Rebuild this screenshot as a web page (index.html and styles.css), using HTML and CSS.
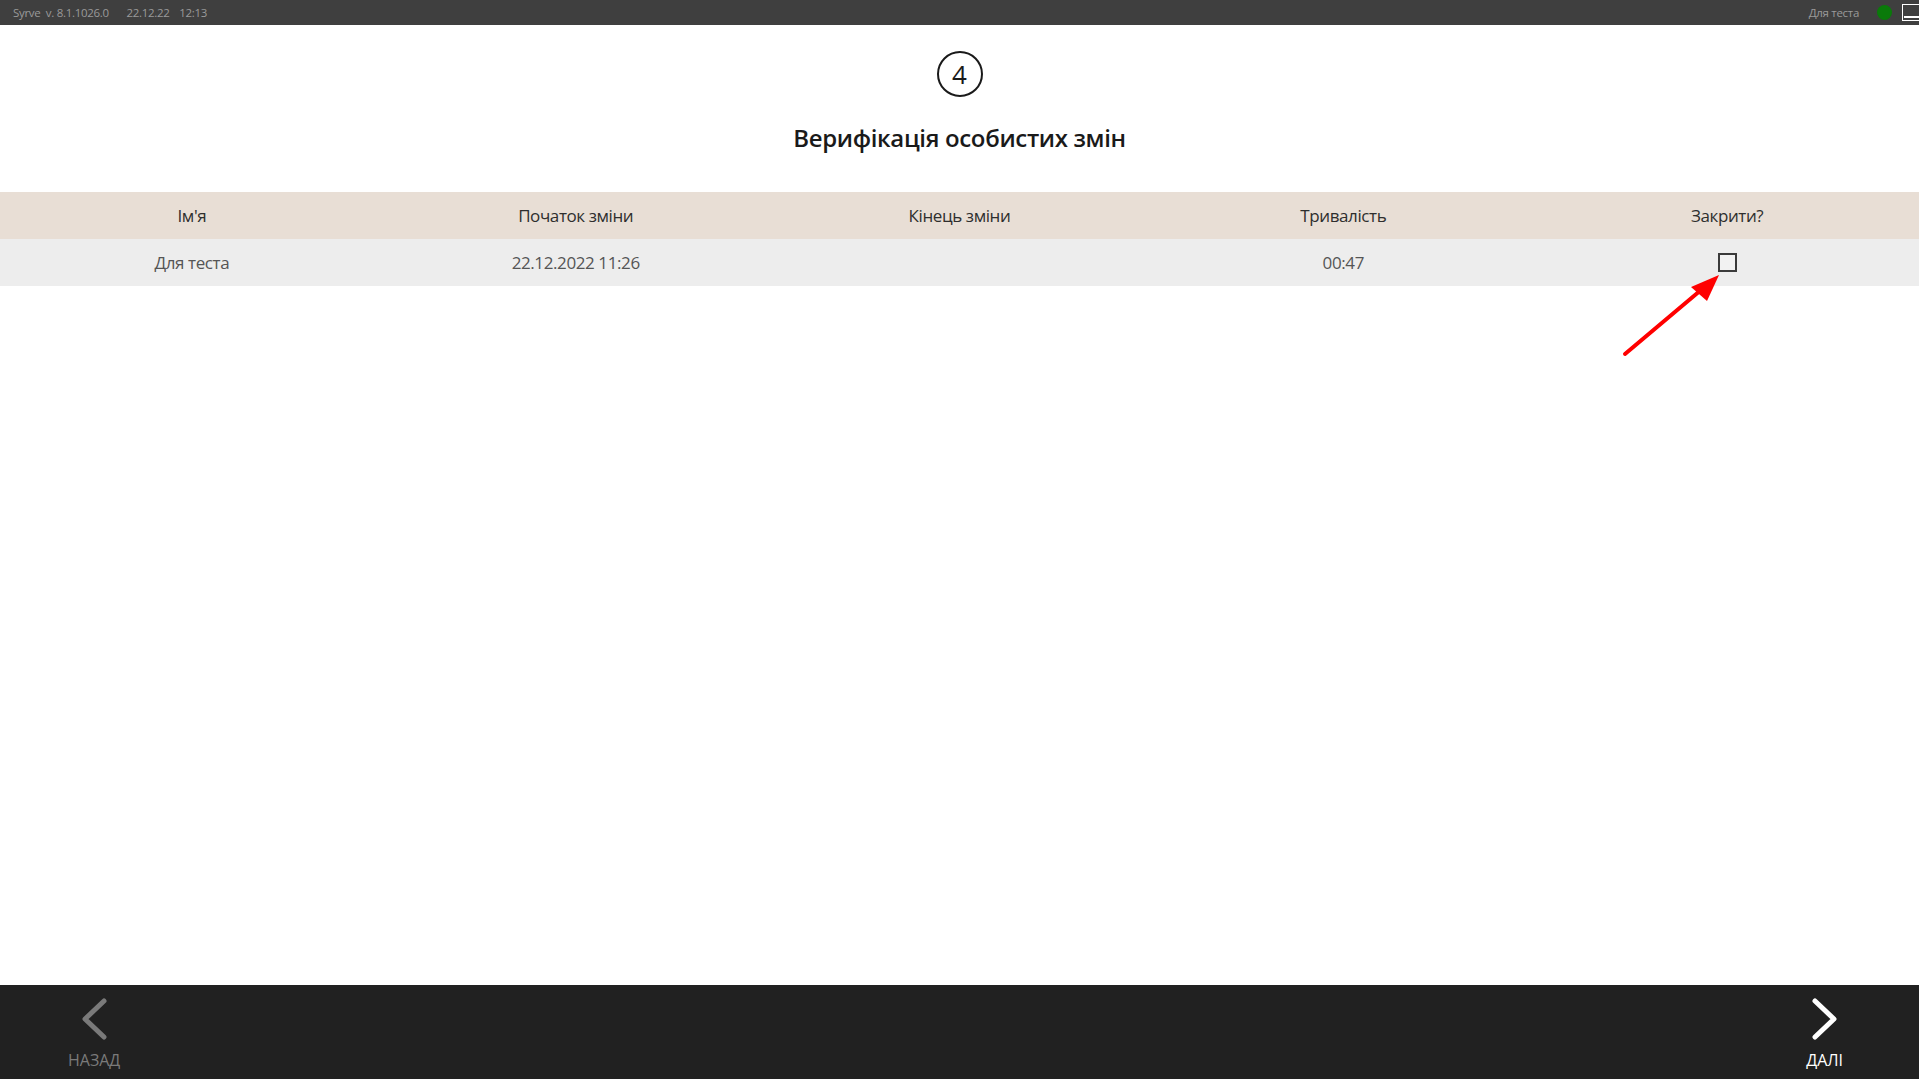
FILE: index.html
```html
<!DOCTYPE html>
<html lang="uk">
<head>
  <meta charset="UTF-8" />
  <title>Верифікація особистих змін</title>
  <link rel="stylesheet" href="styles.css">
</head>
<body>
  <div class="topbar">
    <div class="topbar-left">
      <span>Syrve&nbsp; v. 8.1.1026.0</span>
      <span class="gap">22.12.22</span>
      <span>12:13</span>
    </div>
    <div class="topbar-right">
      <span>Для теста</span>
      <span class="status-dot"></span>
      <span class="tray-icon"></span>
    </div>
  </div>

  <div class="main">
    <div class="step">4</div>
    <h1>Верифікація особистих змін</h1>

    <div class="grid head">
      <div>Ім'я</div>
      <div>Початок зміни</div>
      <div>Кінець зміни</div>
      <div>Тривалість</div>
      <div>Закрити?</div>
    </div>
    <div class="grid row">
      <div>Для теста</div>
      <div>22.12.2022 11:26</div>
      <div></div>
      <div>00:47</div>
      <div class="check-cell"><span class="checkbox"></span></div>
    </div>

    <svg class="pointer" width="110" height="90" viewBox="0 0 110 90">
      <line x1="4" y1="83" x2="80" y2="19" stroke="#ff0000" stroke-width="4" stroke-linecap="round"/>
      <polygon points="98,4 70,16 86,30" fill="#ff0000"/>
    </svg>
  </div>

  <div class="bottombar">
    <div class="nav back">
      <svg width="30" height="44" viewBox="0 0 30 44">
        <polyline points="25,4 6,22 25,40" fill="none" stroke="#7a7a7a" stroke-width="5" stroke-linecap="round" stroke-linejoin="round"/>
      </svg>
      <span>НАЗАД</span>
    </div>
    <div class="nav next">
      <svg width="30" height="44" viewBox="0 0 30 44">
        <polyline points="5,4 24,22 5,40" fill="none" stroke="#ffffff" stroke-width="5" stroke-linecap="round" stroke-linejoin="round"/>
      </svg>
      <span>ДАЛІ</span>
    </div>
  </div>
</body>
</html>
```

FILE: styles.css
```css
html, body {
  height: 100%;
}

body {
  margin: 0;
  font-family: "Open Sans", "Noto Sans", Arial, sans-serif;
  background: #fff;
  display: flex;
  flex-direction: column;
  overflow: hidden;
}

.topbar {
  height: 25px;
  background: #3f3f3f;
  color: #9a9a9a;
  font-size: 11.5px;
  letter-spacing: -0.3px;
  display: flex;
  justify-content: space-between;
  align-items: center;
  padding-left: 13px;
}

.topbar-left span {
  margin-right: 11px;
}

.topbar-left .gap {
  margin-left: 4px;
  margin-right: 7px;
}

.topbar-right {
  display: flex;
  align-items: center;
}

.status-dot {
  width: 15px;
  height: 15px;
  border-radius: 50%;
  background: #0a7a0a;
  margin-left: 18px;
  margin-right: 10px;
}

.tray-icon {
  width: 17px;
  height: 17px;
  border: 1px solid #fff;
  border-right: none;
  box-sizing: border-box;
  position: relative;
}

.tray-icon::after {
  content: "";
  position: absolute;
  left: 1px;
  right: 0;
  bottom: 2px;
  height: 2px;
  background: #fff;
}

.main {
  flex: 1;
  position: relative;
  display: flex;
  flex-direction: column;
  align-items: center;
}

.step {
  margin-top: 26px;
  width: 42px;
  height: 42px;
  border: 2px solid #1a1a1a;
  border-radius: 50%;
  display: flex;
  align-items: center;
  justify-content: center;
  font-size: 26px;
  color: #1a1a1a;
}

h1 {
  margin: 24px 0 0;
  font-size: 24px;
  font-weight: 600;
  color: #1a1a1a;
  letter-spacing: -0.35px;
}

.grid {
  align-self: stretch;
  display: grid;
  grid-template-columns: repeat(5, 1fr);
  height: 47px;
  align-items: center;
  text-align: center;
  font-size: 17px;
  letter-spacing: -0.4px;
}

.head {
  margin-top: 38px;
  background: #e8ded5;
  color: #2e2e2e;
}

.row {
  background: #ededed;
  color: #555;
}

.check-cell {
  display: flex;
  justify-content: center;
  align-items: center;
}

.checkbox {
  width: 19px;
  height: 19px;
  box-sizing: border-box;
  border: 2px solid #3a3a3a;
  background: #f2f2f2;
}

.pointer {
  position: absolute;
  left: 1621px;
  top: 246px;
}

.bottombar {
  height: 94px;
  background: #212121;
  display: flex;
  justify-content: space-between;
  align-items: flex-start;
}

.nav {
  display: flex;
  flex-direction: column;
  align-items: center;
  padding-top: 12px;
  font-size: 16px;
}

.nav span {
  margin-top: 8px;
}

.back {
  margin-left: 68px;
  color: #7a7a7a;
}

.next {
  margin-right: 76px;
  color: #fff;
}
```
